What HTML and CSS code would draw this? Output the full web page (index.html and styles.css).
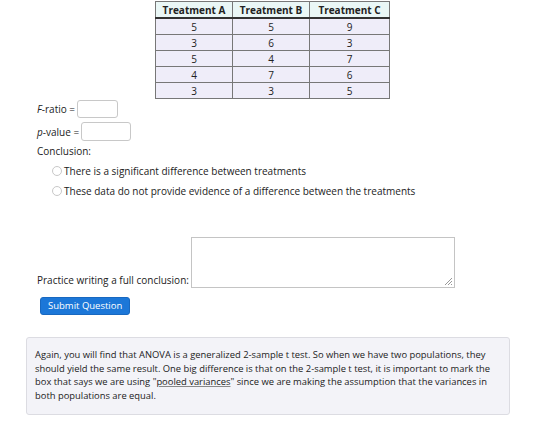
FILE: index.html
```html
<!DOCTYPE html>
<html>
<head>
<meta charset="utf-8">
<link rel="stylesheet" href="styles.css">
</head>
<body>
<div class="page">
  <table class="data">
    <thead>
      <tr><th>Treatment A</th><th>Treatment B</th><th>Treatment C</th></tr>
    </thead>
    <tbody>
      <tr><td>5</td><td>5</td><td>9</td></tr>
      <tr><td>3</td><td>6</td><td>3</td></tr>
      <tr><td>5</td><td>4</td><td>7</td></tr>
      <tr><td>4</td><td>7</td><td>6</td></tr>
      <tr><td>3</td><td>3</td><td>5</td></tr>
    </tbody>
  </table>

  <div class="q">
    <div class="field f1"><span><i>F</i>-ratio =</span><span class="inp w40"></span></div>
    <div class="field f2"><span><i>p</i>-value =</span><span class="inp w50"></span></div>
    <div class="concl">Conclusion:</div>
    <div class="radios">
      <div class="radio"><span class="circle"></span>There is a significant difference between treatments</div>
      <div class="radio"><span class="circle"></span>These data do not provide evidence of a difference between the treatments</div>
    </div>
    <div class="practice">
      <span class="plabel">Practice writing a full conclusion:</span>
      <span class="ta"><svg class="grip" width="9" height="9" viewBox="0 0 9 9"><path d="M8 1 L1 8 M8 4 L4 8 M8 7 L7 8" stroke="#999" stroke-width="1"/></svg></span>
    </div>
    <div class="btnrow"><span class="btn">Submit Question</span></div>
  </div>

  <div class="note">
    Again, you will find that ANOVA is a generalized 2-sample t test. So when we have two populations, they should yield the same result. One big difference is that on the 2-sample t test, it is important to mark the box that says we are using "<span class="ul">pooled variances</span>" since we are making the assumption that the variances in both populations are equal.
  </div>
</div>
</body>
</html>
```

FILE: styles.css
```css
html, body {
  margin: 0;
  padding: 0;
  background: #fff;
}
body {
  font-family: "Open Sans", "Liberation Sans", sans-serif;
  font-size: 10px;
  color: #222;
}
.page {
  padding: 0;
}
.data {
  border-collapse: collapse;
  margin-left: 155px;
  margin-top: 1px;
  font-size: 10px;
}
.data th, .data td {
  border: 1px solid #777;
  text-align: center;
  padding: 0;
  white-space: nowrap;
}
.data th {
  background: #eaf7f6;
  font-weight: 700;
  height: 15px;
  border-bottom: 2px solid #333;
}
.data td {
  background: #efedf9;
  height: 15px;
  line-height: 14px;
}
.data th:nth-child(1), .data th:nth-child(2) { width: 76px; }
.data th:nth-child(3) { width: 79px; }
.q {
  padding-left: 37px;
}
.field {
  display: flex;
  align-items: center;
  gap: 2px;
}
.f1 { margin-top: 0px; height: 20px; }
.f2 { margin-top: 2px; height: 21px; }
.inp {
  display: inline-block;
  height: 18px;
  border: 1px solid #c8c8c8;
  border-radius: 3px;
  background: #fff;
  box-sizing: border-box;
}
.f2 .inp { height: 19px; }
.w40 { width: 41px; }
.w50 { width: 50px; }
.concl {
  margin-top: 1px;
  line-height: 16px;
}
.radios {
  margin-top: 2px;
  padding-left: 15px;
}
.radio {
  display: flex;
  align-items: center;
  height: 20px;
}
.circle {
  display: inline-block;
  width: 10px;
  height: 10px;
  border: 1px solid #c8c8c8;
  border-radius: 50%;
  margin-right: 2px;
  box-sizing: border-box;
}
.practice {
  display: flex;
  align-items: flex-end;
  margin-top: 36px;
}
.plabel {
  line-height: 14px;
  margin-bottom: 1px;
}
.ta {
  position: relative;
  display: inline-block;
  width: 264px;
  height: 51px;
  border: 1px solid #c4c4c4;
  box-sizing: border-box;
  margin-left: 2px;
}
.grip {
  position: absolute;
  right: 1px;
  bottom: 1px;
}
.btnrow {
  margin-top: 9px;
  padding-left: 3px;
}
.btn {
  display: inline-block;
  background: #1c77d8;
  color: #fff;
  border-radius: 3px;
  font-size: 9.5px;
  line-height: 16px;
  padding: 0 7px;
  border: 1px solid #1868c0;
}
.note {
  margin: 22px 50px 0 26px;
  background: #f3f3f8;
  border: 1px solid #dcdce2;
  border-radius: 3px;
  padding: 10px 8px 12px 8px;
  font-size: 9.4px;
  line-height: 13.5px;
  color: #222;
}
.ul {
  text-decoration: underline;
  text-decoration-color: #888;
}
```
